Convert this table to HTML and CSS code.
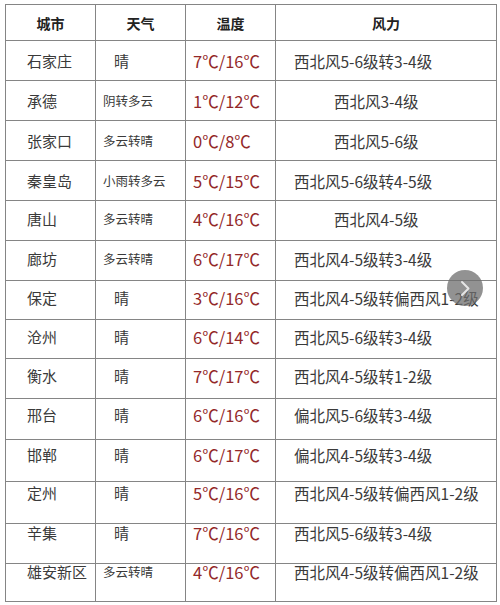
FILE: index.html
```html
<!DOCTYPE html>
<html lang="zh">
<head>
<meta charset="utf-8">
<link rel="stylesheet" href="styles.css">
</head>
<body>
<div class="page">
  <table class="weather">
    <colgroup>
      <col class="c-city"><col class="c-wx"><col class="c-temp"><col class="c-wind">
    </colgroup>
    <thead>
      <tr class="head"><th>城市</th><th>天气</th><th>温度</th><th>风力</th></tr>
    </thead>
    <tbody>
      <tr class="r1"><td class="city">石家庄</td><td class="wx">晴</td><td class="temp">7℃/16℃</td><td class="wind">西北风5-6级转3-4级</td></tr>
      <tr class="r2"><td class="city">承德</td><td class="wx sm">阴转多云</td><td class="temp">1℃/12℃</td><td class="wind ind">西北风3-4级</td></tr>
      <tr class="r3"><td class="city">张家口</td><td class="wx sm">多云转晴</td><td class="temp">0℃/8℃</td><td class="wind ind">西北风5-6级</td></tr>
      <tr class="r4"><td class="city">秦皇岛</td><td class="wx sm">小雨转多云</td><td class="temp">5℃/15℃</td><td class="wind">西北风5-6级转4-5级</td></tr>
      <tr class="r5"><td class="city">唐山</td><td class="wx sm">多云转晴</td><td class="temp">4℃/16℃</td><td class="wind ind">西北风4-5级</td></tr>
      <tr class="r6"><td class="city">廊坊</td><td class="wx sm">多云转晴</td><td class="temp">6℃/17℃</td><td class="wind">西北风4-5级转3-4级</td></tr>
      <tr class="r7"><td class="city">保定</td><td class="wx">晴</td><td class="temp">3℃/16℃</td><td class="wind">西北风4-5级转偏西风1-2级</td></tr>
      <tr class="r8"><td class="city">沧州</td><td class="wx">晴</td><td class="temp">6℃/14℃</td><td class="wind">西北风5-6级转3-4级</td></tr>
      <tr class="r9"><td class="city">衡水</td><td class="wx">晴</td><td class="temp">7℃/17℃</td><td class="wind">西北风4-5级转1-2级</td></tr>
      <tr class="r10"><td class="city">邢台</td><td class="wx">晴</td><td class="temp">6℃/16℃</td><td class="wind">偏北风5-6级转3-4级</td></tr>
      <tr class="r11"><td class="city">邯郸</td><td class="wx">晴</td><td class="temp">6℃/17℃</td><td class="wind">偏北风4-5级转3-4级</td></tr>
      <tr class="r12"><td class="city">定州</td><td class="wx">晴</td><td class="temp">5℃/16℃</td><td class="wind">西北风4-5级转偏西风1-2级</td></tr>
      <tr class="r13"><td class="city">辛集</td><td class="wx">晴</td><td class="temp">7℃/16℃</td><td class="wind">西北风5-6级转3-4级</td></tr>
      <tr class="r14"><td class="city">雄安新区</td><td class="wx sm">多云转晴</td><td class="temp">4℃/16℃</td><td class="wind">西北风4-5级转偏西风1-2级</td></tr>
    </tbody>
  </table>
  <div class="next-btn">
    <svg width="36" height="36" viewBox="0 0 36 36"><path d="M15 12 L21.5 18.5 L15 25" fill="none" stroke="#e6e6e6" stroke-width="2" stroke-linecap="round" stroke-linejoin="round"/></svg>
  </div>
</div>
</body>
</html>
```
FILE: styles.css
```css
html, body {
  margin: 0;
  padding: 0;
  background: #ffffff;
}
.page {
  position: relative;
  width: 500px;
  height: 605px;
  padding: 4px 0 0 5px;
  box-sizing: border-box;
  font-family: "Noto Sans CJK SC", "Noto Sans", sans-serif;
  color: #3a3a3a;
  overflow: hidden;
}
.weather {
  border-collapse: collapse;
  table-layout: fixed;
  width: 491px;
}
.c-city { width: 90px; }
.c-wx { width: 90px; }
.c-temp { width: 90px; }
.c-wind { width: 221px; }
.weather th, .weather td {
  border: 1px solid #858585;
  padding: 0;
  white-space: nowrap;
}
.weather th {
  height: 35px;
  line-height: 20px;
  font-size: 14px;
  font-weight: bold;
  color: #222;
  text-align: center;
  vertical-align: middle;
}
.weather tbody tr {
  --h: 40px;
  --p: 10px;
  --lh: 20px;
}
.weather td {
  height: calc(var(--h) - 1px - var(--p));
  padding-top: var(--p);
  line-height: var(--lh);
  vertical-align: top;
  text-align: left;
}
.weather tbody .r5, .weather tbody .r6 { --p: 8px; }
.weather tbody .r7, .weather tbody .r8 { --h: 39px; --p: 7px; }
.weather tbody .r9 { --p: 7px; }
.weather tbody .r10 { --h: 41px; --p: 6px; }
.weather tbody .r11 { --h: 42px; --p: 5px; }
.weather tbody .r12 { --h: 42px; --p: 1px; }
.weather tbody .r13 { --p: 1px; --lh: 16px; }
.weather tbody .r14 { --h: 38px; --p: 0px; --lh: 16px; }
.weather td.city {
  font-size: 15px;
  padding-left: 21px;
}
.weather td.wx {
  font-size: 15px;
  padding-left: 18px;
}
.weather td.wx.sm {
  font-size: 12.5px;
  padding-left: 7px;
}
.weather td.temp {
  font-size: 16.5px;
  color: #932829;
  padding-left: 7px;
}
.weather td.wind {
  font-size: 15.5px;
  padding-left: 18px;
}
.weather td.wind.ind {
  padding-left: 58px;
}
.next-btn {
  position: absolute;
  left: 447px;
  top: 270px;
  width: 36px;
  height: 36px;
  border-radius: 50%;
  background: rgba(110, 110, 110, 0.75);
  display: flex;
  align-items: center;
  justify-content: center;
}
.next-btn svg {
  display: block;
}
```
